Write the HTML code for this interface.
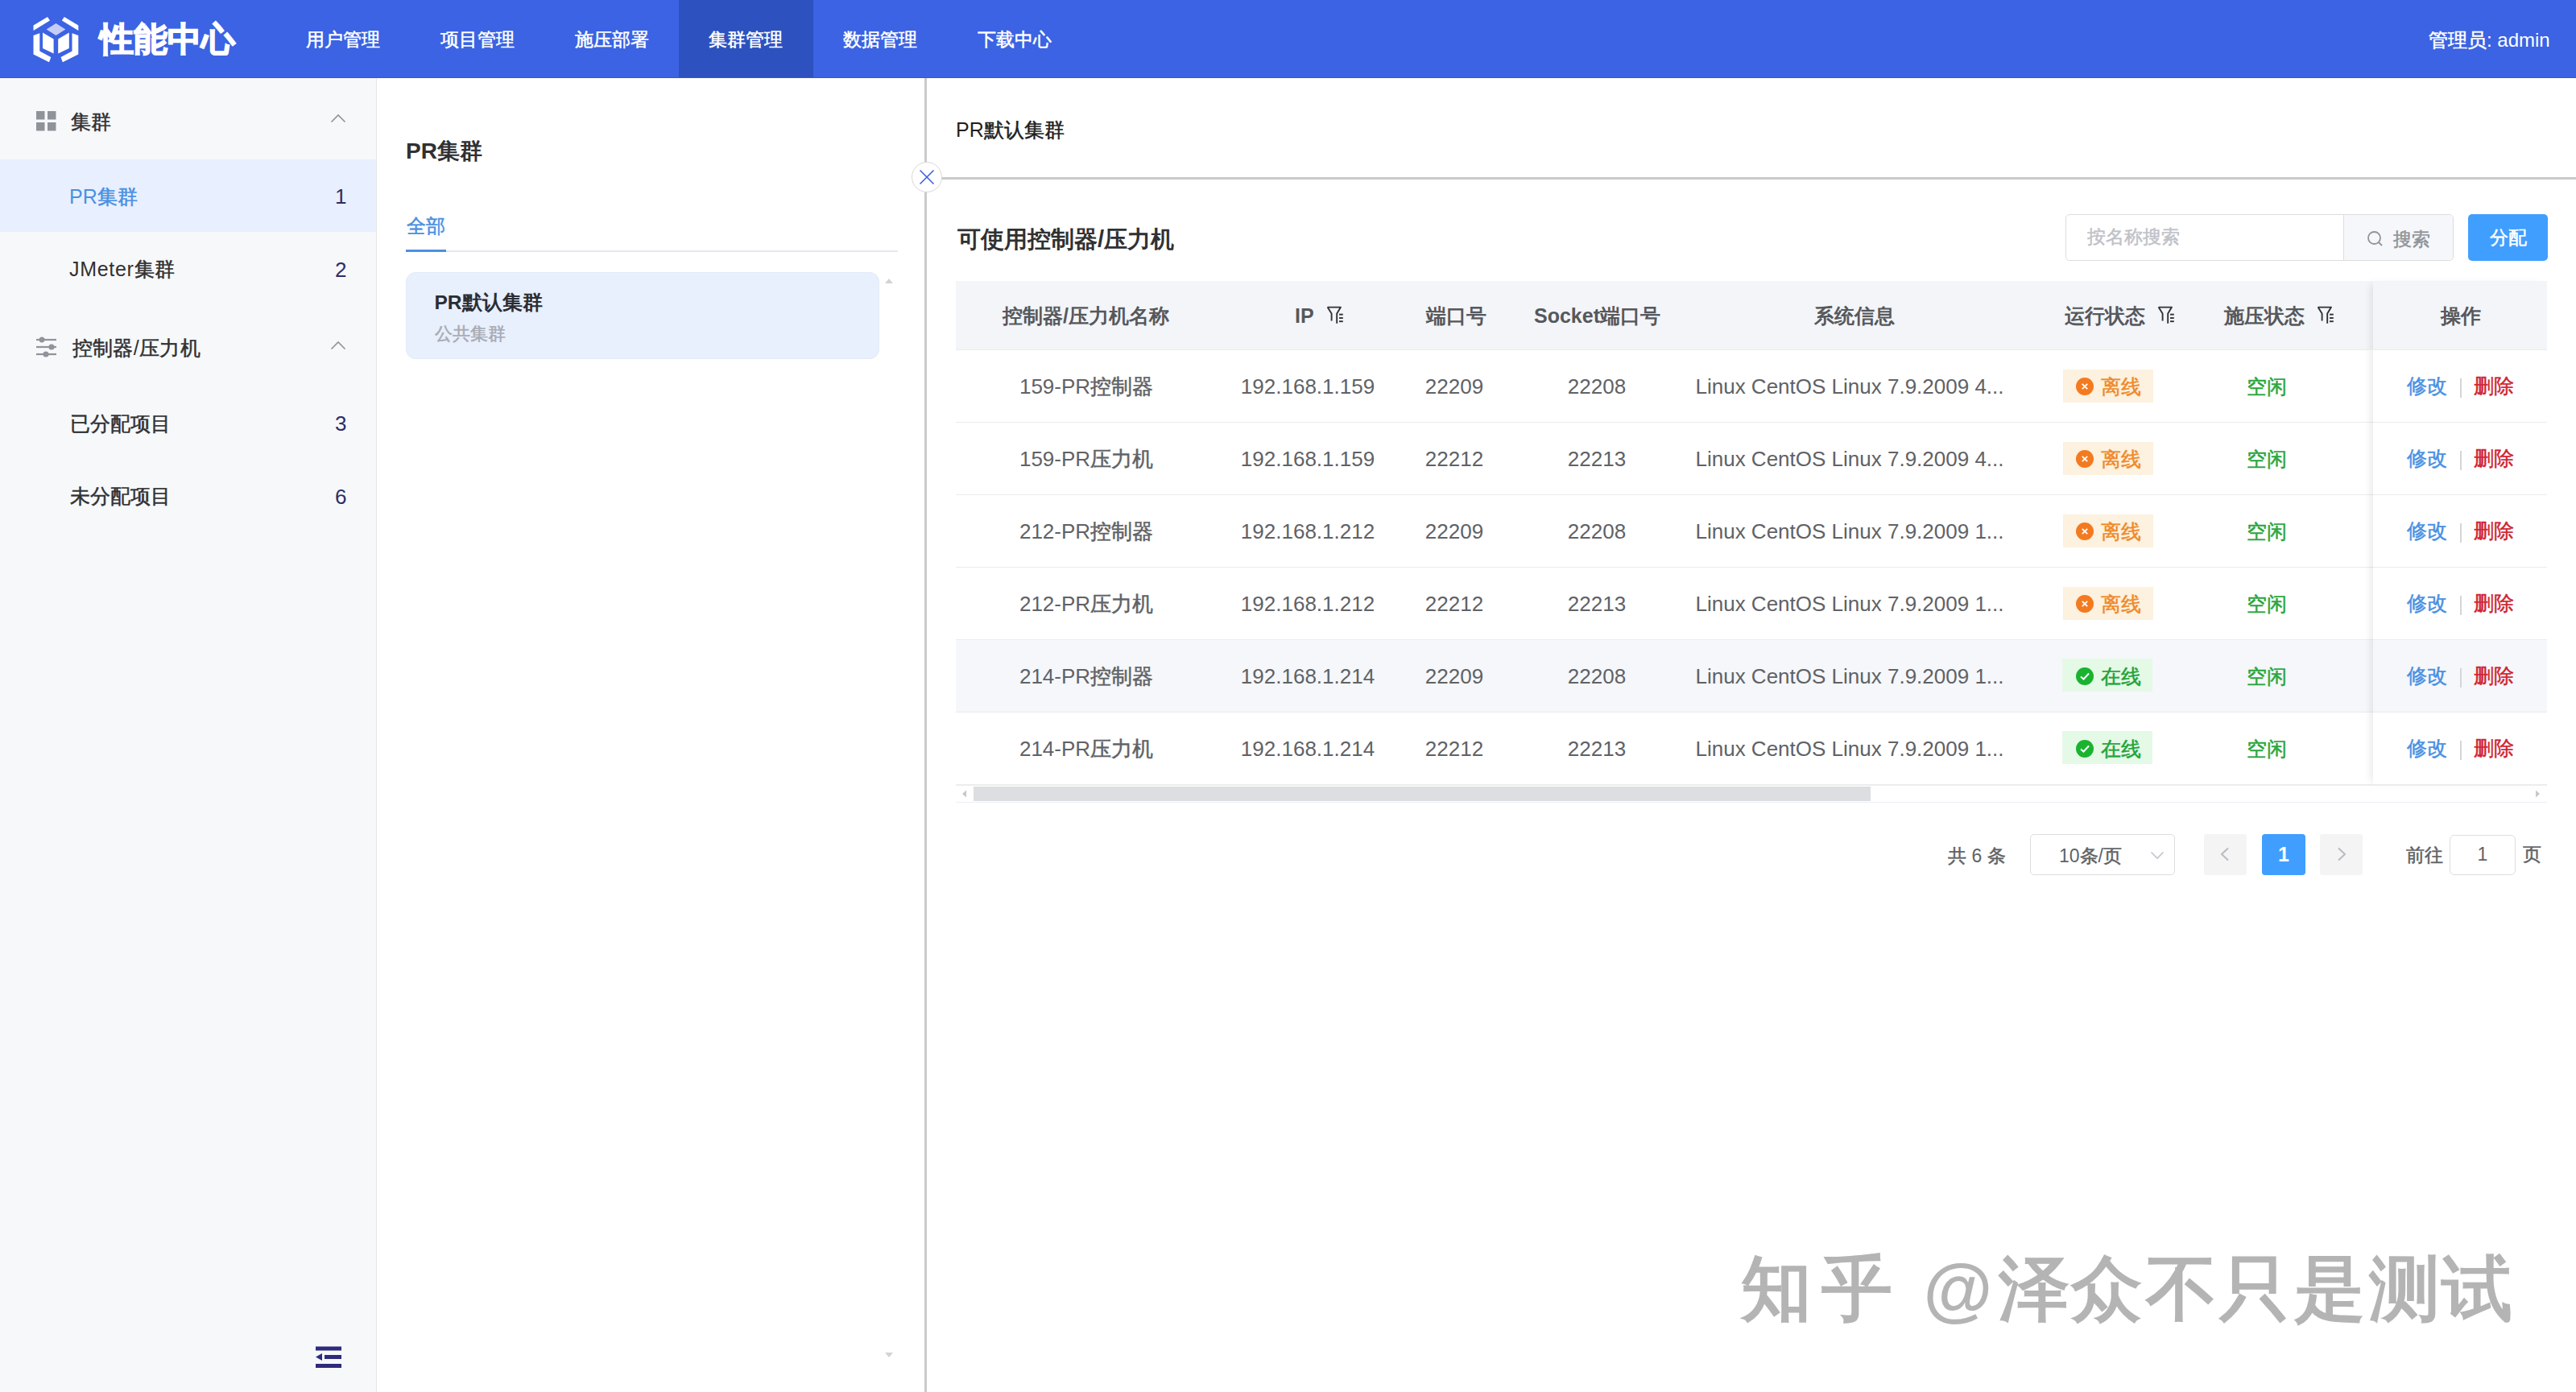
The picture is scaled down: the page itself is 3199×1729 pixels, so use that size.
<!DOCTYPE html>
<html><head><meta charset="utf-8">
<style>
html,body{margin:0;padding:0;width:3199px;height:1729px;overflow:hidden;background:#fff;font-family:"Liberation Sans",sans-serif;}
.t{position:absolute;white-space:nowrap;line-height:1;}
.k{-webkit-text-stroke:0.5px currentColor;}
.th .k,.wm .k{-webkit-text-stroke:0;}
.c{text-align:center;}
#hdr{position:absolute;left:0;top:0;width:3199px;height:97px;background:#3b63e3;}
#nav-active{position:absolute;left:843px;top:0;width:167px;height:97px;background:#2d51bf;}
.nav{color:#fff;font-size:23px;top:38px;}
#side{position:absolute;left:0;top:97px;width:467px;height:1632px;background:#f7f8fa;border-right:1px solid #e6e6e6;}
#side-active{position:absolute;left:0;top:198px;width:467px;height:90px;background:#e8effe;}
.st{color:#303133;font-size:25px;}
.cnt{color:#2c2e66;font-size:26px;}
#vdiv{position:absolute;left:1148px;top:97px;width:3px;height:1632px;background:#cacaca;}
#hdiv{position:absolute;left:1151px;top:220px;width:2048px;height:3px;background:#cacaca;}
#circ{position:absolute;left:1131.5px;top:201px;width:36px;height:36px;border:1px solid #d8d8d8;border-radius:50%;background:#fff;}
.th{color:#56585c;font-weight:bold;font-size:25px;top:380px;}
.td{color:#606266;font-size:26px;}
.rowline{position:absolute;left:1187px;width:1976px;height:1px;background:#ebebeb;}
.tag{position:absolute;width:112px;height:41px;}
.tag-off{background:#fdf1df;}
.tag-on{background:#e5f9e7;}
.wm{top:1557px;font-size:88px;font-weight:bold;color:#b4b4b4;}
.ico{position:absolute;width:22px;height:22px;border-radius:50%;}
</style></head>
<body>
<!-- HEADER -->
<div id="hdr"></div>
<div id="nav-active"></div>
<div style="position:absolute;left:0;top:96px;width:3199px;height:1px;background:#3d56b9;"></div>
<svg style="position:absolute;left:0;top:0" width="140" height="96" viewBox="0 0 140 96">
  <polygon fill="#fff" points="41.5,31.5 59,21 62,25.5 41.5,38"/>
  <polygon fill="#fff" points="97.3,31.5 79.8,21 76.8,25.5 97.3,38"/>
  <polygon fill="#fff" points="41.5,44 49.3,41.3 49.3,63.4 63.3,70.9 61,77.2 41.5,67.5"/>
  <polygon fill="#fff" points="97.3,44 89.5,41.3 89.5,63.4 75.5,70.9 77.8,77.2 97.3,67.5"/>
  <polygon fill="#c5cdf7" points="57.6,36.4 69.5,29 81.4,36.4 69.5,44"/>
  <polygon fill="#fff" points="53,40.5 66.6,48.5 66.6,66.6 53,60"/>
  <polygon fill="#fff" points="72.2,48.5 85.8,40.5 85.8,60 72.2,66.6"/>
</svg>
<div class="t" style="left:124px;top:28px;font-size:42px;font-weight:bold;color:#fff;-webkit-text-stroke:1.5px #fff;">性能中心</div>
<div class="t nav" style="left:380px;"><span class="k">用户管理</span></div>
<div class="t nav" style="left:547px;"><span class="k">项目管理</span></div>
<div class="t nav" style="left:714px;"><span class="k">施压部署</span></div>
<div class="t nav" style="left:880px;"><span class="k">集群管理</span></div>
<div class="t nav" style="left:1047px;"><span class="k">数据管理</span></div>
<div class="t nav" style="left:1214px;"><span class="k">下载中心</span></div>
<div class="t nav" style="left:3016px;font-size:24px;"><span class="k">管理员</span>: admin</div>

<!-- SIDEBAR -->
<div id="side"></div>
<div id="side-active"></div>
<svg style="position:absolute;left:45px;top:138px" width="25" height="25" viewBox="0 0 25 25">
  <rect x="0" y="0" width="10.5" height="10.5" fill="#909399"/><rect x="14" y="0" width="10.5" height="10.5" fill="#909399"/>
  <rect x="0" y="14" width="10.5" height="10.5" fill="#909399"/><rect x="14" y="14" width="10.5" height="10.5" fill="#909399"/>
</svg>
<div class="t st" style="left:88px;top:139px;"><span class="k">集群</span></div>
<svg style="position:absolute;left:410px;top:141px" width="20" height="12" viewBox="0 0 20 12"><polyline points="1.5,10.5 10,2 18.5,10.5" fill="none" stroke="#909399" stroke-width="1.6"/></svg>
<div class="t st" style="left:86px;top:232px;color:#4a90e2;">PR<span class="k">集群</span></div>
<div class="t cnt" style="left:416px;top:231px;">1</div>
<div class="t st" style="left:86px;top:322px;letter-spacing:0.7px;">JMeter<span class="k">集群</span></div>
<div class="t cnt" style="left:416px;top:322px;">2</div>
<svg style="position:absolute;left:45px;top:418px" width="26" height="26" viewBox="0 0 26 26">
  <g stroke="#909399" stroke-width="2.2" fill="#909399">
  <line x1="0" y1="4" x2="25" y2="4"/><line x1="0" y1="13" x2="25" y2="13"/><line x1="0" y1="22" x2="25" y2="22"/>
  <circle cx="7" cy="4" r="2.5"/><circle cx="19" cy="13" r="2.5"/><circle cx="12" cy="22" r="2.5"/>
  </g>
</svg>
<div class="t st" style="left:89.5px;top:420px;letter-spacing:0.4px;"><span class="k">控制器</span>/<span class="k">压力机</span></div>
<svg style="position:absolute;left:410px;top:423px" width="20" height="12" viewBox="0 0 20 12"><polyline points="1.5,10.5 10,2 18.5,10.5" fill="none" stroke="#909399" stroke-width="1.6"/></svg>
<div class="t st" style="left:87px;top:514px;"><span class="k">已分配项目</span></div>
<div class="t cnt" style="left:416px;top:513px;">3</div>
<div class="t st" style="left:87px;top:604px;"><span class="k">未分配项目</span></div>
<div class="t cnt" style="left:416px;top:604px;">6</div>
<svg style="position:absolute;left:392px;top:1672px" width="33" height="28" viewBox="0 0 33 28">
  <rect x="0" y="0.5" width="32" height="5" fill="#2e2b7d"/>
  <rect x="11" y="11" width="21" height="5" fill="#2e2b7d"/>
  <rect x="0" y="22" width="32" height="5" fill="#2e2b7d"/>
  <polygon points="0,13.5 8,9 8,18" fill="#2e2b7d"/>
</svg>

<!-- MIDDLE PANEL -->
<div class="t" style="left:504px;top:174px;font-size:28px;font-weight:bold;color:#303133;">PR集群</div>
<div class="t" style="left:505px;top:268.5px;font-size:24px;color:#4a90e2;"><span class="k">全部</span></div>
<div style="position:absolute;left:504px;top:311px;width:611px;height:2px;background:#e4e7ed;"></div>
<div style="position:absolute;left:504px;top:310px;width:50px;height:3px;background:#4a90e2;"></div>
<div style="position:absolute;left:504px;top:338px;width:588px;height:108px;background:#e8effd;border-radius:12px;border:1px solid #e4eaf7;box-sizing:border-box;"></div>
<div class="t" style="left:539.5px;top:364px;font-size:24.5px;font-weight:bold;color:#2b2d33;">PR默认集群</div>
<div class="t" style="left:540px;top:404px;font-size:22px;color:#a8abb2;"><span class="k">公共集群</span></div>
<svg style="position:absolute;left:1098px;top:345px" width="12" height="8" viewBox="0 0 12 8"><polygon points="1,7 6,1 11,7" fill="#d3d3d3"/></svg>
<svg style="position:absolute;left:1098px;top:1679px" width="12" height="8" viewBox="0 0 12 8"><polygon points="1,1 6,7 11,1" fill="#d3d3d3"/></svg>

<!-- DIVIDERS -->
<div id="vdiv"></div>
<div id="hdiv"></div>
<div id="circ"></div>
<svg style="position:absolute;left:1140px;top:210px" width="22" height="20" viewBox="0 0 22 20"><g stroke="#3b5fd8" stroke-width="1.6"><line x1="2.5" y1="1.5" x2="19.5" y2="18.5"/><line x1="19.5" y1="1.5" x2="2.5" y2="18.5"/></g></svg>

<!-- RIGHT PANEL -->
<div class="t" style="left:1187px;top:149px;font-size:25px;color:#1f1f1f;">PR<span class="k">默认集群</span></div>
<div class="t" style="left:1189px;top:282px;font-size:29.3px;font-weight:bold;color:#303133;">可使用控制器/压力机</div>

<!-- search -->
<div style="position:absolute;left:2565px;top:266px;width:480px;height:56px;border:1px solid #dddddd;border-radius:5px;background:#fff;"></div>
<div style="position:absolute;left:2910px;top:267px;width:135px;height:56px;border-left:1px solid #dddddd;background:#f5f7fa;border-radius:0 5px 5px 0;"></div>
<div class="t" style="left:2592px;top:283px;font-size:23.4px;color:#bfc2c8;"><span class="k">按名称搜索</span></div>
<svg style="position:absolute;left:2939px;top:285.5px" width="22" height="22" viewBox="0 0 22 22"><circle cx="9.5" cy="9.5" r="7.5" fill="none" stroke="#909399" stroke-width="1.8"/><line x1="15" y1="15" x2="19" y2="19" stroke="#909399" stroke-width="1.8"/></svg>
<div class="t" style="left:2971.5px;top:286px;font-size:23px;color:#909399;"><span class="k">搜索</span></div>
<div style="position:absolute;left:3065px;top:266px;width:99px;height:58px;background:#409eff;border-radius:5px;"></div>
<div class="t" style="left:3092px;top:283.5px;font-size:23px;color:#fff;"><span class="k">分配</span></div>

<!-- TABLE -->
<div style="position:absolute;left:1187px;top:349px;width:1976px;height:86px;background:#f3f5f8;"></div>
<div id="rows">
<div class="t th c" style="left:1198.5px;width:300px;">控制器/压力机名称</div>
<div class="t th" style="left:1608px;">IP</div>
<div class="t th c" style="left:1658.0px;width:300px;">端口号</div>
<div class="t th c" style="left:1833.5px;width:300px;">Socket端口号</div>
<div class="t th c" style="left:2153.0px;width:300px;">系统信息</div>
<div class="t th c" style="left:2464.0px;width:300px;">运行状态</div>
<div class="t th c" style="left:2662.0px;width:300px;">施压状态</div>
<svg style="position:absolute;left:1647px;top:380px" width="21" height="23" viewBox="0 0 21 23"><g fill="none" stroke="#303133" stroke-width="1.9" stroke-linejoin="round"><path d="M1.6,1.6 H18 L13.2,9.6 V21.8"/><path d="M1.6,1.6 L6.6,9.6 V18.4"/><line x1="16" y1="10.6" x2="20.8" y2="10.6"/><line x1="16" y1="15" x2="20.8" y2="15"/><line x1="16" y1="19.2" x2="20.8" y2="19.2"/></g></svg>
<svg style="position:absolute;left:2679px;top:380px" width="21" height="23" viewBox="0 0 21 23"><g fill="none" stroke="#303133" stroke-width="1.9" stroke-linejoin="round"><path d="M1.6,1.6 H18 L13.2,9.6 V21.8"/><path d="M1.6,1.6 L6.6,9.6 V18.4"/><line x1="16" y1="10.6" x2="20.8" y2="10.6"/><line x1="16" y1="15" x2="20.8" y2="15"/><line x1="16" y1="19.2" x2="20.8" y2="19.2"/></g></svg>
<svg style="position:absolute;left:2877px;top:380px" width="21" height="23" viewBox="0 0 21 23"><g fill="none" stroke="#303133" stroke-width="1.9" stroke-linejoin="round"><path d="M1.6,1.6 H18 L13.2,9.6 V21.8"/><path d="M1.6,1.6 L6.6,9.6 V18.4"/><line x1="16" y1="10.6" x2="20.8" y2="10.6"/><line x1="16" y1="15" x2="20.8" y2="15"/><line x1="16" y1="19.2" x2="20.8" y2="19.2"/></g></svg>
<div style="position:absolute;left:1187px;top:795px;width:1760px;height:89px;background:#f5f7fa;"></div>
<div class="t td c" style="left:1049px;width:600px;top:467px;">159-PR<span class="k">控制器</span></div>
<div class="t td c" style="left:1324px;width:600px;top:467px;">192.168.1.159</div>
<div class="t td c" style="left:1506px;width:600px;top:467px;">22209</div>
<div class="t td c" style="left:1683px;width:600px;top:467px;">22208</div>
<div class="t td c" style="left:1997px;width:600px;top:467px;">Linux CentOS Linux 7.9.2009 4...</div>
<div class="tag tag-off" style="left:2562px;top:459px;"></div>
<svg style="position:absolute;left:2578px;top:469px" width="22" height="22" viewBox="0 0 22 22"><circle cx="11" cy="11" r="11" fill="#f47a20"/><g stroke="#fff" stroke-width="1.8"><line x1="7.8" y1="7.8" x2="14.2" y2="14.2"/><line x1="14.2" y1="7.8" x2="7.8" y2="14.2"/></g></svg>
<div class="t" style="left:2609px;top:468px;font-size:25px;color:#ef8a2b;"><span class="k">离线</span></div>
<div class="t" style="left:2790px;top:468px;font-size:25px;color:#2aa63e;"><span class="k">空闲</span></div>
<div class="rowline" style="top:524px;"></div>
<div class="t td c" style="left:1049px;width:600px;top:557px;">159-PR<span class="k">压力机</span></div>
<div class="t td c" style="left:1324px;width:600px;top:557px;">192.168.1.159</div>
<div class="t td c" style="left:1506px;width:600px;top:557px;">22212</div>
<div class="t td c" style="left:1683px;width:600px;top:557px;">22213</div>
<div class="t td c" style="left:1997px;width:600px;top:557px;">Linux CentOS Linux 7.9.2009 4...</div>
<div class="tag tag-off" style="left:2562px;top:549px;"></div>
<svg style="position:absolute;left:2578px;top:559px" width="22" height="22" viewBox="0 0 22 22"><circle cx="11" cy="11" r="11" fill="#f47a20"/><g stroke="#fff" stroke-width="1.8"><line x1="7.8" y1="7.8" x2="14.2" y2="14.2"/><line x1="14.2" y1="7.8" x2="7.8" y2="14.2"/></g></svg>
<div class="t" style="left:2609px;top:558px;font-size:25px;color:#ef8a2b;"><span class="k">离线</span></div>
<div class="t" style="left:2790px;top:558px;font-size:25px;color:#2aa63e;"><span class="k">空闲</span></div>
<div class="rowline" style="top:614px;"></div>
<div class="t td c" style="left:1049px;width:600px;top:647px;">212-PR<span class="k">控制器</span></div>
<div class="t td c" style="left:1324px;width:600px;top:647px;">192.168.1.212</div>
<div class="t td c" style="left:1506px;width:600px;top:647px;">22209</div>
<div class="t td c" style="left:1683px;width:600px;top:647px;">22208</div>
<div class="t td c" style="left:1997px;width:600px;top:647px;">Linux CentOS Linux 7.9.2009 1...</div>
<div class="tag tag-off" style="left:2562px;top:639px;"></div>
<svg style="position:absolute;left:2578px;top:649px" width="22" height="22" viewBox="0 0 22 22"><circle cx="11" cy="11" r="11" fill="#f47a20"/><g stroke="#fff" stroke-width="1.8"><line x1="7.8" y1="7.8" x2="14.2" y2="14.2"/><line x1="14.2" y1="7.8" x2="7.8" y2="14.2"/></g></svg>
<div class="t" style="left:2609px;top:648px;font-size:25px;color:#ef8a2b;"><span class="k">离线</span></div>
<div class="t" style="left:2790px;top:648px;font-size:25px;color:#2aa63e;"><span class="k">空闲</span></div>
<div class="rowline" style="top:704px;"></div>
<div class="t td c" style="left:1049px;width:600px;top:737px;">212-PR<span class="k">压力机</span></div>
<div class="t td c" style="left:1324px;width:600px;top:737px;">192.168.1.212</div>
<div class="t td c" style="left:1506px;width:600px;top:737px;">22212</div>
<div class="t td c" style="left:1683px;width:600px;top:737px;">22213</div>
<div class="t td c" style="left:1997px;width:600px;top:737px;">Linux CentOS Linux 7.9.2009 1...</div>
<div class="tag tag-off" style="left:2562px;top:729px;"></div>
<svg style="position:absolute;left:2578px;top:739px" width="22" height="22" viewBox="0 0 22 22"><circle cx="11" cy="11" r="11" fill="#f47a20"/><g stroke="#fff" stroke-width="1.8"><line x1="7.8" y1="7.8" x2="14.2" y2="14.2"/><line x1="14.2" y1="7.8" x2="7.8" y2="14.2"/></g></svg>
<div class="t" style="left:2609px;top:738px;font-size:25px;color:#ef8a2b;"><span class="k">离线</span></div>
<div class="t" style="left:2790px;top:738px;font-size:25px;color:#2aa63e;"><span class="k">空闲</span></div>
<div class="rowline" style="top:794px;"></div>
<div class="t td c" style="left:1049px;width:600px;top:827px;">214-PR<span class="k">控制器</span></div>
<div class="t td c" style="left:1324px;width:600px;top:827px;">192.168.1.214</div>
<div class="t td c" style="left:1506px;width:600px;top:827px;">22209</div>
<div class="t td c" style="left:1683px;width:600px;top:827px;">22208</div>
<div class="t td c" style="left:1997px;width:600px;top:827px;">Linux CentOS Linux 7.9.2009 1...</div>
<div class="tag tag-on" style="left:2561px;top:818px;"></div>
<svg style="position:absolute;left:2578px;top:829px" width="22" height="22" viewBox="0 0 22 22"><circle cx="11" cy="11" r="11" fill="#1ab330"/><polyline points="6,11.5 9.5,14.5 16,7.5" fill="none" stroke="#fff" stroke-width="2"/></svg>
<div class="t" style="left:2609px;top:828px;font-size:25px;color:#22a33a;"><span class="k">在线</span></div>
<div class="t" style="left:2790px;top:828px;font-size:25px;color:#2aa63e;"><span class="k">空闲</span></div>
<div class="rowline" style="top:884px;"></div>
<div class="t td c" style="left:1049px;width:600px;top:917px;">214-PR<span class="k">压力机</span></div>
<div class="t td c" style="left:1324px;width:600px;top:917px;">192.168.1.214</div>
<div class="t td c" style="left:1506px;width:600px;top:917px;">22212</div>
<div class="t td c" style="left:1683px;width:600px;top:917px;">22213</div>
<div class="t td c" style="left:1997px;width:600px;top:917px;">Linux CentOS Linux 7.9.2009 1...</div>
<div class="tag tag-on" style="left:2561px;top:908px;"></div>
<svg style="position:absolute;left:2578px;top:919px" width="22" height="22" viewBox="0 0 22 22"><circle cx="11" cy="11" r="11" fill="#1ab330"/><polyline points="6,11.5 9.5,14.5 16,7.5" fill="none" stroke="#fff" stroke-width="2"/></svg>
<div class="t" style="left:2609px;top:918px;font-size:25px;color:#22a33a;"><span class="k">在线</span></div>
<div class="t" style="left:2790px;top:918px;font-size:25px;color:#2aa63e;"><span class="k">空闲</span></div>
<div class="rowline" style="top:974px;"></div>
<div style="position:absolute;left:2947px;top:349px;width:216px;height:626px;background:#fff;box-shadow:-6px 0 10px -4px rgba(0,0,0,0.10);"></div>
<div style="position:absolute;left:2947px;top:349px;width:216px;height:86px;background:#f3f5f8;"></div>
<div style="position:absolute;left:2947px;top:795px;width:216px;height:89px;background:#f5f7fa;"></div>
<div class="t th c" style="left:2906.0px;width:300px;">操作</div>
<div class="rowline" style="top:434px;"></div>
<div class="rowline" style="left:2947px;width:216px;top:524px;"></div>
<div class="t" style="left:2989px;top:467px;font-size:25px;color:#4a90e2;"><span class="k">修改</span></div>
<div style="position:absolute;left:3055px;top:470px;width:2px;height:24px;background:#d6d6d6;"></div>
<div class="t" style="left:3072px;top:467px;font-size:25px;color:#d0232f;"><span class="k">删除</span></div>
<div class="rowline" style="left:2947px;width:216px;top:614px;"></div>
<div class="t" style="left:2989px;top:557px;font-size:25px;color:#4a90e2;"><span class="k">修改</span></div>
<div style="position:absolute;left:3055px;top:560px;width:2px;height:24px;background:#d6d6d6;"></div>
<div class="t" style="left:3072px;top:557px;font-size:25px;color:#d0232f;"><span class="k">删除</span></div>
<div class="rowline" style="left:2947px;width:216px;top:704px;"></div>
<div class="t" style="left:2989px;top:647px;font-size:25px;color:#4a90e2;"><span class="k">修改</span></div>
<div style="position:absolute;left:3055px;top:650px;width:2px;height:24px;background:#d6d6d6;"></div>
<div class="t" style="left:3072px;top:647px;font-size:25px;color:#d0232f;"><span class="k">删除</span></div>
<div class="rowline" style="left:2947px;width:216px;top:794px;"></div>
<div class="t" style="left:2989px;top:737px;font-size:25px;color:#4a90e2;"><span class="k">修改</span></div>
<div style="position:absolute;left:3055px;top:740px;width:2px;height:24px;background:#d6d6d6;"></div>
<div class="t" style="left:3072px;top:737px;font-size:25px;color:#d0232f;"><span class="k">删除</span></div>
<div class="rowline" style="left:2947px;width:216px;top:884px;"></div>
<div class="t" style="left:2989px;top:827px;font-size:25px;color:#4a90e2;"><span class="k">修改</span></div>
<div style="position:absolute;left:3055px;top:830px;width:2px;height:24px;background:#d6d6d6;"></div>
<div class="t" style="left:3072px;top:827px;font-size:25px;color:#d0232f;"><span class="k">删除</span></div>
<div class="rowline" style="left:2947px;width:216px;top:974px;"></div>
<div class="t" style="left:2989px;top:917px;font-size:25px;color:#4a90e2;"><span class="k">修改</span></div>
<div style="position:absolute;left:3055px;top:920px;width:2px;height:24px;background:#d6d6d6;"></div>
<div class="t" style="left:3072px;top:917px;font-size:25px;color:#d0232f;"><span class="k">删除</span></div>
<div style="position:absolute;left:1187px;top:975px;width:1976px;height:1px;background:#ebeef5;"></div>
<div style="position:absolute;left:1209px;top:977px;width:1114px;height:18px;background:#dcdee2;"></div>
<div style="position:absolute;left:1187px;top:996px;width:1976px;height:1px;background:#ebeef5;"></div>
<svg style="position:absolute;left:1194px;top:981px" width="7" height="10" viewBox="0 0 7 10"><polygon points="6,0.5 1,5 6,9.5" fill="#c8c8c8"/></svg>
<svg style="position:absolute;left:3148px;top:981px" width="7" height="10" viewBox="0 0 7 10"><polygon points="1,0.5 6,5 1,9.5" fill="#c8c8c8"/></svg>
<div class="t" style="left:2419px;top:1051.5px;font-size:23px;color:#606266;"><span class="k">共</span> 6 <span class="k">条</span></div>
<div style="position:absolute;left:2521px;top:1036px;width:178px;height:49px;border:1px solid #dddddd;border-radius:5px;"></div>
<div class="t" style="left:2557px;top:1051.5px;font-size:23px;color:#606266;">10<span class="k">条</span>/<span class="k">页</span></div>
<svg style="position:absolute;left:2670px;top:1057px" width="18" height="11" viewBox="0 0 18 11"><polyline points="1.5,1.5 9,9 16.5,1.5" fill="none" stroke="#c0c4cc" stroke-width="1.6"/></svg>
<div style="position:absolute;left:2737px;top:1036px;width:53px;height:51px;background:#f4f4f5;border-radius:3px;"></div>
<svg style="position:absolute;left:2756px;top:1052px" width="13" height="18" viewBox="0 0 13 18"><polyline points="11,1.5 3,9 11,16.5" fill="none" stroke="#b8bbc2" stroke-width="2"/></svg>
<div style="position:absolute;left:2809px;top:1036px;width:54px;height:51px;background:#409eff;border-radius:4px;"></div>
<div class="t" style="left:2809px;width:54px;top:1049px;font-size:25px;font-weight:bold;color:#fff;text-align:center;">1</div>
<div style="position:absolute;left:2881px;top:1036px;width:53px;height:51px;background:#f4f4f5;border-radius:3px;"></div>
<svg style="position:absolute;left:2902px;top:1052px" width="13" height="18" viewBox="0 0 13 18"><polyline points="2,1.5 10,9 2,16.5" fill="none" stroke="#b8bbc2" stroke-width="2"/></svg>
<div class="t" style="left:2988px;top:1051px;font-size:23px;color:#606266;"><span class="k">前往</span></div>
<div style="position:absolute;left:3042px;top:1037px;width:80px;height:48px;border:1px solid #dddddd;border-radius:6px;"></div>
<div class="t" style="left:3042px;width:82px;top:1050px;font-size:23px;color:#606266;text-align:center;">1</div>
<div class="t" style="left:3132.5px;top:1050px;font-size:23px;color:#606266;"><span class="k">页</span></div>
<div class="t wm" style="left:2162.3px;">知</div>
<div class="t wm" style="left:2261.8px;">乎</div>
<div class="t wm" style="left:2388.5px;">@</div>
<div class="t wm" style="left:2481.5px;">泽</div>
<div class="t wm" style="left:2572.2px;">众</div>
<div class="t wm" style="left:2665.0px;">不</div>
<div class="t wm" style="left:2755.5px;">只</div>
<div class="t wm" style="left:2849.0px;">是</div>
<div class="t wm" style="left:2942.1px;">测</div>
<div class="t wm" style="left:3032.0px;">试</div>
</div>
</body></html>
